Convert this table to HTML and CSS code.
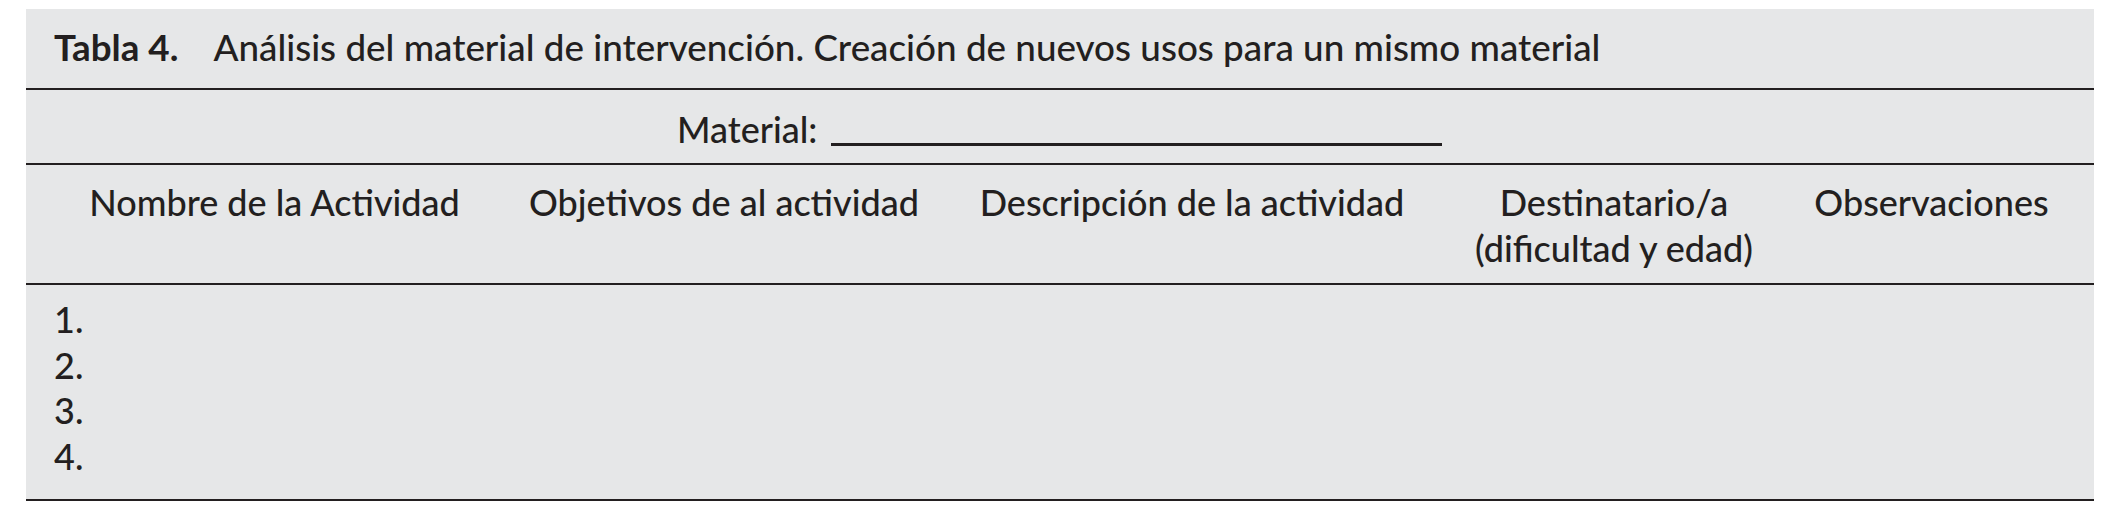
FILE: index.html
```html
<!DOCTYPE html>
<html lang="es">
<head>
<meta charset="utf-8">
<title>Tabla 4</title>
<link rel="stylesheet" href="styles.css">
</head>
<body>
<div class="table">
  <div class="caption"><span class="caption-label">Tabla 4.</span><span class="caption-text">Análisis del material de intervención. Creación de nuevos usos para un mismo material</span></div>
  <div class="material-row"><span class="material-label">Material:</span><span class="blank"></span></div>
  <div class="head-row">
    <div class="col">Nombre de la Actividad</div>
    <div class="col">Objetivos de al actividad</div>
    <div class="col">Descripción de la actividad</div>
    <div class="col">Destinatario/a<br>(dificultad y edad)</div>
    <div class="col">Observaciones</div>
  </div>
  <div class="body-row">
    <ol class="list">
      <li>1.</li>
      <li>2.</li>
      <li>3.</li>
      <li>4.</li>
    </ol>
  </div>
</div>
</body>
</html>
```
FILE: styles.css
```css
* { box-sizing: border-box; }
html, body { margin: 0; padding: 0; background: #ffffff; }
body {
  padding: 9px 0 0 26px;
  font-family: Lato, "Liberation Sans", sans-serif;
  font-weight: 500;
  color: #231f20;
}
.table {
  width: 2068px;
  background: #e6e7e8;
}
.caption {
  height: 81px;
  border-bottom: 2px solid #231f20;
  padding: 16px 0 0 28px;
  font-size: 36.8px;
  line-height: 44px;
  white-space: nowrap;
}
.caption-label { font-weight: 700; margin-right: 35px; }
.material-row {
  height: 75px;
  border-bottom: 2px solid #231f20;
  display: flex;
  align-items: flex-start;
  padding: 19px 0 0 651px;
  font-size: 36px;
  line-height: 40px;
}
.material-label { margin-right: 14px; }
.blank {
  display: inline-block;
  width: 611px;
  height: 37px;
  border-bottom: 3px solid #231f20;
}
.head-row {
  height: 120px;
  border-bottom: 2px solid #231f20;
  display: grid;
  grid-template-columns: 497px 402px 534px 310px 325px;
  padding-top: 14px;
  font-size: 36px;
  line-height: 46px;
}
.col { text-align: center; white-space: nowrap; }
.body-row {
  height: 216px;
  border-bottom: 2px solid #231f20;
  padding: 12px 0 0 28px;
}
.list {
  list-style: none;
  margin: 0;
  padding: 0;
  font-size: 36px;
  line-height: 45.5px;
}
```
